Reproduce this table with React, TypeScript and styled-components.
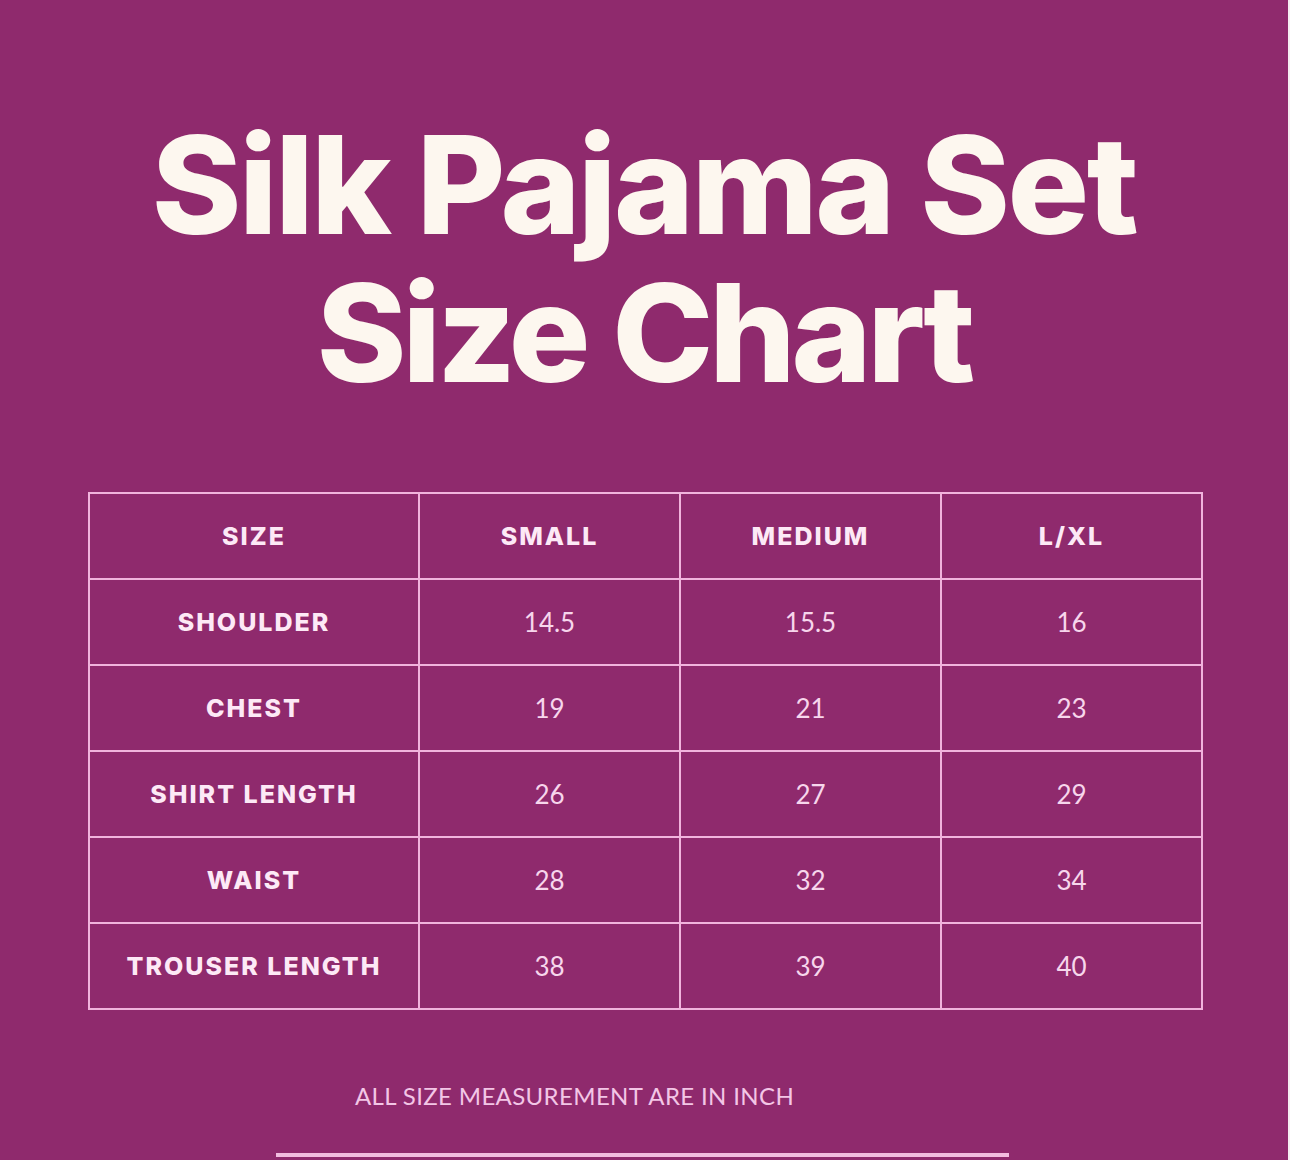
import styled, { createGlobalStyle } from "styled-components";

const GlobalStyle = createGlobalStyle`
  html, body {
    margin: 0;
    padding: 0;
    background: #8f2a6d;
  }
`;

const rows = [
  { label: "SHOULDER", values: ["14.5", "15.5", "16"] },
  { label: "CHEST", values: ["19", "21", "23"] },
  { label: "SHIRT LENGTH", values: ["26", "27", "29"] },
  { label: "WAIST", values: ["28", "32", "34"] },
  { label: "TROUSER LENGTH", values: ["38", "39", "40"] },
];

const Page = styled.div`
  width: 1290px;
  height: 1160px;
  overflow: hidden;
  background: #8f2a6d;
  box-sizing: border-box;
  border-right: 2px solid #f6eef2;
  display: flex;
  flex-direction: column;
  font-family: Inter, "Noto Sans", sans-serif;
`;

const Title = styled.h1`
  margin: 120px 0 0;
  display: flex;
  flex-direction: column;
  gap: 18px;
  align-items: center;
  color: #fdf7ef;
  font-family: Inter, sans-serif;
  font-weight: 800;
  font-size: 136px;
  line-height: 130px;
  letter-spacing: -0.018em;
`;

const TitleLine = styled.span<{ $tight?: boolean }>`
  display: block;
  letter-spacing: ${(p) => (p.$tight ? "-0.03em" : "-0.018em")};
`;

const Table = styled.table`
  margin: 94px 0 0 88px;
  width: 1113px;
  border-collapse: collapse;
  table-layout: fixed;
  border: 2px solid #f1b4dd;
`;

const Cell = styled.td<{ $head?: boolean }>`
  height: 84px;
  padding: 0;
  border: 2px solid #f1b4dd;
  text-align: center;
  vertical-align: middle;
  color: ${(p) => (p.$head ? "#fde9f6" : "#f7d6ec")};
  font-family: ${(p) => (p.$head ? "Inter" : "Lato")}, sans-serif;
  font-weight: ${(p) => (p.$head ? 800 : 400)};
  font-size: ${(p) => (p.$head ? "25px" : "26px")};
  letter-spacing: ${(p) => (p.$head ? "0.08em" : "0")};
`;

const Note = styled.div`
  margin: 71px 0 0 355px;
  color: #f3c6e6;
  font-family: Lato, sans-serif;
  font-weight: 400;
  font-size: 24px;
  letter-spacing: 0.015em;
`;

const BottomBar = styled.div`
  margin: 43px 0 0 276px;
  width: 733px;
  height: 4px;
  background: #f2bde0;
`;

export default function App() {
  return (
    <>
      <GlobalStyle />
      <Page>
        <Title>
          <TitleLine>Silk Pajama Set</TitleLine>
          <TitleLine $tight>Size Chart</TitleLine>
        </Title>
        <Table>
          <colgroup>
            <col style={{ width: 330 }} />
            <col style={{ width: 261 }} />
            <col style={{ width: 261 }} />
            <col style={{ width: 261 }} />
          </colgroup>
          <tbody>
            <tr>
              <Cell $head>SIZE</Cell>
              <Cell $head>SMALL</Cell>
              <Cell $head>MEDIUM</Cell>
              <Cell $head>L/XL</Cell>
            </tr>
            {rows.map((r) => (
              <tr key={r.label}>
                <Cell $head>{r.label}</Cell>
                {r.values.map((v, i) => (
                  <Cell key={i}>{v}</Cell>
                ))}
              </tr>
            ))}
          </tbody>
        </Table>
        <Note>ALL SIZE MEASUREMENT ARE IN INCH</Note>
        <BottomBar />
      </Page>
    </>
  );
}
